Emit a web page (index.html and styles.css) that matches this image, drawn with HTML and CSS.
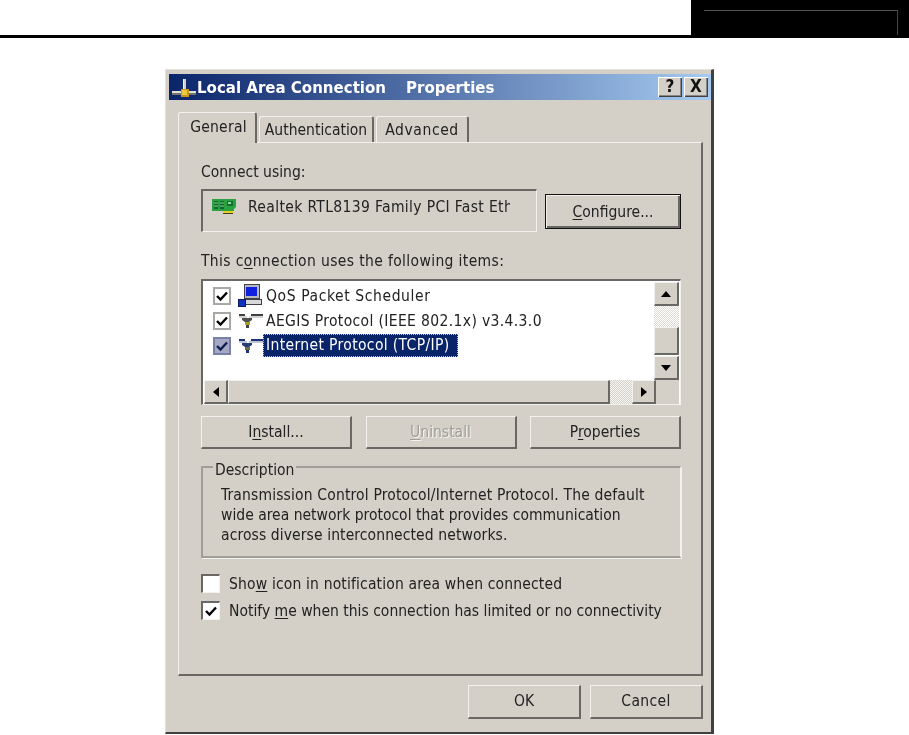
FILE: index.html
```html
<!DOCTYPE html>
<html lang="en">
<head>
    <meta charset="UTF-8">
    <title>Local Area Connection Properties</title>
    <link rel="stylesheet" href="styles.css">
</head>
<body>

    <div class="page-head">
        <div class="head-rule"></div>
        <div class="head-tag"><div class="head-tag-line"></div></div>
    </div>

    <div class="dialog">
        <div class="titlebar">
            <svg class="title-icon" width="26" height="24" viewBox="0 0 26 24">
                <rect x="12" y="4" width="3" height="11" fill="#d0d0c8"/>
                <rect x="12" y="4" width="1" height="11" fill="#f4f4ec"/>
                <rect x="1" y="16" width="24" height="2" fill="#e0e0d8"/>
                <rect x="1" y="18" width="24" height="2" fill="#747468"/>
                <rect x="10" y="14" width="8" height="8" fill="#c89818"/>
                <rect x="11" y="15" width="5" height="5" fill="#f0c840"/>
            </svg>
            <span class="title-text">Local Area Connection</span>
            <span class="title-text title-second">Properties</span>
            <div class="title-btns">
                <div class="title-btn">?</div>
                <div class="title-btn">X</div>
            </div>
        </div>

        <div class="tabs">
            <div class="tab tab-active">General</div>
            <div class="tab tab-auth">Authentication</div>
            <div class="tab tab-adv wide-3">Advanced</div>
        </div>

        <div class="panel">
            <div class="lbl lbl-connect">Connect using:</div>
            <div class="connect-row">
                <div class="device">
                    <svg width="25" height="18" viewBox="0 0 25 18">
                        <path d="M0 1h24v8l-2 2v2H0z" fill="#2aa040"/>
                        <path d="M2 3h4v8H2zM8 3h4v8H8z" fill="#0f6a28"/>
                        <path d="M2 5h4M2 8h4M8 5h4M8 8h4" stroke="#7fd090" stroke-width="1"/>
                        <rect x="15" y="3" width="6" height="5" fill="#107030"/>
                        <rect x="16" y="4" width="3" height="2" fill="#90d8a0"/>
                        <rect x="11" y="13" width="10" height="2" fill="#e8d020"/>
                        <rect x="11" y="15" width="10" height="1" fill="#3c3c30"/>
                    </svg>
                    <span class="device-name wide-2">Realtek RTL8139 Family PCI Fast Eth</span>
                </div>
                <div class="btn btn-default btn-configure"><span><u>C</u>onfigure...</span></div>
            </div>

            <div class="lbl lbl-items wide-2">This c<u>o</u>nnection uses the following items:</div>
            <div class="listbox">
                <div class="list-main">
                    <div class="list-rows">
                        <div class="row">
                            <div class="check"><svg width="14" height="14" viewBox="0 0 14 14"><path class="tick" d="M2 7l3.5 3.5L12 3.5"/></svg></div>
                            <svg class="row-icon" width="25" height="24" viewBox="0 0 25 24">
                                <rect x="6.5" y="0.5" width="15" height="14" fill="#b8b8c0" stroke="#404048"/>
                                <rect x="8" y="3" width="11" height="9" fill="#1020e0"/>
                                <rect x="7.5" y="15.5" width="16" height="5" fill="#d8d8d8" stroke="#404048"/>
                                <rect x="0.5" y="15.5" width="7" height="7" fill="#1030c0" stroke="#101860"/>
                            </svg>
                            <span class="row-text wide-3">QoS Packet Scheduler</span>
                        </div>
                        <div class="row">
                            <div class="check"><svg width="14" height="14" viewBox="0 0 14 14"><path class="tick" d="M2 7l3.5 3.5L12 3.5"/></svg></div>
                            <svg class="row-icon" width="25" height="16" viewBox="0 0 25 16">
                                <path d="M1 2h6M13 2h12" stroke="#404040" stroke-width="2"/>
                                <path d="M1 4h8M11 4h14" stroke="#a8a8a8"/>
                                <path d="M4 5h10v2l-3 2H7L4 7z" fill="#505050"/>
                                <rect x="7" y="9" width="5" height="3" fill="#a8a020"/>
                                <rect x="8" y="12" width="3" height="3" fill="#404040"/>
                            </svg>
                            <span class="row-text wide-2">AEGIS Protocol (IEEE 802.1x) v3.4.3.0</span>
                        </div>
                        <div class="row">
                            <div class="check check-selected"><svg width="14" height="14" viewBox="0 0 14 14"><path class="tick tick-selected" d="M2 7l3.5 3.5L12 3.5"/></svg></div>
                            <svg class="row-icon" width="25" height="16" viewBox="0 0 25 16">
                                <path d="M1 2h6M13 2h12" stroke="#1c3070" stroke-width="2"/>
                                <path d="M1 4h8M11 4h14" stroke="#7888b0"/>
                                <path d="M4 5h10v2l-3 2H7L4 7z" fill="#283c78"/>
                                <rect x="7" y="9" width="5" height="3" fill="#687048"/>
                                <rect x="8" y="12" width="3" height="3" fill="#1c3070"/>
                            </svg>
                            <span class="row-text row-selected wide-2">Internet Protocol (TCP/IP)</span>
                        </div>
                    </div>
                    <div class="vscroll">
                        <div class="sb-btn"><svg width="12" height="8" viewBox="0 0 12 8"><path d="M6 1l5 6H1z"/></svg></div>
                        <div class="sb-track sb-track-up"></div>
                        <div class="sb-thumb sb-thumb-v"></div>
                        <div class="sb-btn sb-btn-down"><svg width="12" height="8" viewBox="0 0 12 8"><path d="M1 1h10L6 7z"/></svg></div>
                    </div>
                </div>
                <div class="hscroll">
                    <div class="sb-btn sb-btn-h"><svg width="8" height="12" viewBox="0 0 8 12"><path d="M7 1v10L1 6z"/></svg></div>
                    <div class="sb-thumb sb-thumb-h"></div>
                    <div class="sb-track sb-track-h"></div>
                    <div class="sb-btn sb-btn-h"><svg width="8" height="12" viewBox="0 0 8 12"><path d="M1 1v10l6-5z"/></svg></div>
                </div>
            </div>

            <div class="btn-row">
                <div class="btn"><span>I<u>n</u>stall...</span></div>
                <div class="btn btn-disabled"><span><u>U</u>ninstall</span></div>
                <div class="btn"><span>P<u>r</u>operties</span></div>
            </div>

            <div class="group">
                <div class="legend">Description</div>
                <div class="group-text">
                    <div class="wide-1">Transmission Control Protocol/Internet Protocol. The default</div>
                    <div>wide area network protocol that provides communication</div>
                    <div class="wide-0">across diverse interconnected networks.</div>
                </div>
            </div>

            <label class="option">
                <div class="check check-sunken"></div>
                <span class="wide-1">Sho<u>w</u> icon in notification area when connected</span>
            </label>
            <label class="option">
                <div class="check check-sunken"><svg width="14" height="14" viewBox="0 0 14 14"><path class="tick" d="M2 7l3.5 3.5L12 3.5"/></svg></div>
                <span>Notify <u>m</u>e when this connection has limited or no connectivity</span>
            </label>
        </div>

        <div class="dialog-btns">
            <div class="btn btn-ok"><span>OK</span></div>
            <div class="btn btn-ok"><span class="wide-2">Cancel</span></div>
        </div>
    </div>

</body>
</html>
```
FILE: styles.css
```css
:root {
    --face: #d4d0c8;
    --shadow: #6a6864;
    --dark: #404040;
    --light: #f4f2ee;
    --navy: #0a246a;
}

* { margin: 0; padding: 0; box-sizing: border-box; }

body {
    width: 909px;
    height: 735px;
    overflow: hidden;
    background: #fff;
    color: #222;
    font-family: "DejaVu Sans Condensed", "DejaVu Sans", sans-serif;
    font-size: 15.5px;
}

u { text-underline-offset: 2px; }

/* tahoma runs a little wider on some lines */
.wide-0 { letter-spacing: 0.1px; }
.wide-1 { letter-spacing: 0.16px; }
.wide-2 { letter-spacing: 0.36px; }
.wide-3 { letter-spacing: 0.6px; }

/* page header */
.page-head {
    display: flex;
    height: 38px;
}

.head-rule {
    flex: 1;
    border-bottom: 3px solid #000;
}

.head-tag {
    width: 218px;
    background: #000;
    padding: 10px 11px 3px 13px;
}

.head-tag-line {
    height: 100%;
    border-top: 1px solid #555;
    border-right: 1px solid #444;
}

/* dialog */
.dialog {
    width: 549px;
    height: 665px;
    margin: 31px 0 0 165px;
    padding: 4px 0 0 3px;
    background: var(--face);
    border-top: 1px solid #e4e2dc;
    border-left: 1px solid #e4e2dc;
    border-right: 3px solid var(--dark);
    border-bottom: 2px solid var(--dark);
    filter: blur(0.3px);
}

.titlebar {
    display: flex;
    align-items: center;
    height: 26px;
    padding-left: 2px;
    color: #fff;
    font-weight: bold;
    background: linear-gradient(90deg, var(--navy), #a6caf0);
}

.title-icon { flex: none; }

.title-text { font-size: 16.7px; }
.title-second { margin-left: 20px; }

.title-btns {
    display: flex;
    gap: 2px;
    margin-left: auto;
    margin-right: 3px;
}

.title-btn {
    width: 24px;
    height: 20px;
    background: var(--face);
    color: #111;
    font-size: 17px;
    line-height: 19px;
    text-align: center;
    font-weight: bold;
    box-shadow: inset 1px 1px 0 #fff, inset -1px -1px 0 var(--dark), inset -2px -2px 0 #888;
}

/* tabs */
.tabs {
    display: flex;
    align-items: flex-end;
    height: 42px;
    margin-left: 9px;
}

.tab {
    height: 26px;
    margin-right: 2px;
    padding-top: 4px;
    text-align: center;
    background: var(--face);
    border-top: 1px solid var(--light);
    border-left: 1px solid var(--light);
    border-right: 2px solid var(--shadow);
    border-radius: 3px 3px 0 0;
}

.tab-active {
    position: relative;
    height: 31px;
    width: 79px;
    padding: 5px 0 0 3px;
    letter-spacing: 0.25px;
    z-index: 1;
    margin-bottom: -1px;
}

.tab-auth { width: 115px; }
.tab-adv { width: 93px; }

.panel {
    width: 525px;
    height: 534px;
    margin-left: 9px;
    padding: 20px 0 0 22px;
    background: var(--face);
    border-top: 1px solid var(--light);
    border-left: 1px solid var(--light);
    border-right: 2px solid var(--shadow);
    border-bottom: 2px solid var(--shadow);
}

.lbl { height: 19px; line-height: 19px; }

.connect-row {
    display: flex;
    align-items: flex-end;
    gap: 8px;
    margin-top: 7px;
    width: 480px;
}

.device {
    display: flex;
    align-items: center;
    width: 336px;
    height: 43px;
    padding: 0 0 9px 9px;
    border-top: 2px solid var(--shadow);
    border-left: 2px solid var(--shadow);
    border-right: 1px solid var(--light);
    border-bottom: 1px solid var(--light);
    overflow: hidden;
}

.device svg { flex: none; }

.device-name {
    width: 262px;
    margin-left: 11px;
    white-space: nowrap;
    overflow: hidden;
    flex: none;
}

/* buttons */
.btn {
    display: flex;
    align-items: center;
    justify-content: center;
    height: 33px;
    background: var(--face);
    border-top: 1px solid var(--light);
    border-left: 1px solid var(--light);
    border-right: 2px solid var(--shadow);
    border-bottom: 2px solid var(--shadow);
}

.btn-default {
    width: 136px;
    height: 35px;
    margin-bottom: 3px;
    border: 1px solid #111;
    box-shadow: inset 1px 1px 0 var(--light), inset -2px -2px 0 var(--shadow);
}

.btn-disabled {
    color: #a09e98;
    text-shadow: 1px 1px 0 var(--light);
}

.lbl-items { margin-top: 20px; }

.listbox {
    width: 480px;
    height: 126px;
    margin-top: 8px;
    background: #fff;
    border-top: 2px solid var(--shadow);
    border-left: 2px solid var(--shadow);
    border-right: 1px solid var(--light);
    border-bottom: 1px solid var(--light);
    display: flex;
    flex-direction: column;
    padding: 1px 1px 0 1px;
}

.list-main {
    display: flex;
    height: 98px;
}

.list-rows {
    flex: 1;
    padding: 1px 0 0 9px;
}

.row {
    display: flex;
    align-items: center;
    height: 25px;
    white-space: nowrap;
}

.check {
    flex: none;
    display: flex;
    align-items: center;
    justify-content: center;
    width: 18px;
    height: 18px;
    background: #fff;
    border: 2px solid #a8a8a4;
}

.tick {
    fill: none;
    stroke: #000;
    stroke-width: 2.4;
}

.tick-selected { stroke: #101c50; }

.check-selected {
    background: #a4a8c4;
    border-color: #7880a8;
}

.check-sunken {
    width: 19px;
    height: 19px;
    border-top: 2px solid var(--shadow);
    border-left: 2px solid var(--shadow);
    border-right: 1px solid var(--light);
    border-bottom: 1px solid var(--light);
}

.row-icon {
    flex: none;
    margin-left: 7px;
}

.row-text { margin-left: 3px; }

.row-selected {
    margin-left: 0;
    padding: 2px 8px 3px 3px;
    color: #fff;
    background: var(--navy);
    outline: 1px dotted #d8c868;
    outline-offset: -1px;
}

/* scrollbars */
.vscroll {
    width: 25px;
    display: flex;
    flex-direction: column;
}

.hscroll {
    display: flex;
    height: 24px;
    background: var(--face);
}

.sb-btn {
    flex: none;
    display: flex;
    align-items: center;
    justify-content: center;
    width: 25px;
    height: 24px;
    background: var(--face);
    border-top: 1px solid var(--light);
    border-left: 1px solid var(--light);
    border-right: 2px solid var(--shadow);
    border-bottom: 2px solid var(--shadow);
}

.sb-btn svg { fill: #000; }

.sb-btn-h { width: 24px; }

.sb-track {
    background: repeating-conic-gradient(#d4d0c8 0 25%, #fff 0 50%) 0 0 / 2px 2px;
    opacity: .8;
}

.sb-track-up { height: 21px; }

.sb-track-h { width: 22px; }

.sb-thumb {
    background: var(--face);
    border-top: 1px solid var(--light);
    border-left: 1px solid var(--light);
    border-right: 2px solid var(--shadow);
    border-bottom: 2px solid var(--shadow);
}

.sb-thumb-v { height: 29px; }
.sb-btn-down { margin-top: 1px; }

.sb-thumb-h { width: 382px; }

.btn-row {
    display: grid;
    grid-template-columns: 151px 151px 151px;
    column-gap: 13.5px;
    width: 480px;
    margin-top: 11px;
}

.group {
    position: relative;
    width: 480px;
    height: 92px;
    margin-top: 17px;
    padding: 17px 0 0 18px;
    border-top: 2px solid #a09e98;
    border-left: 2px solid #a09e98;
    border-right: 1px solid var(--light);
    border-bottom: 2px solid #a09e98;
    box-shadow: 1px 1px 0 var(--light);
}

.legend {
    position: absolute;
    top: -7px;
    left: 10px;
    padding: 0 2px;
    background: var(--face);
}

.group-text div {
    height: 20px;
    line-height: 20px;
    white-space: nowrap;
}

.option {
    display: flex;
    align-items: center;
    gap: 9px;
    height: 27px;
    white-space: nowrap;
}

.group + .option { margin-top: 12px; }

.dialog-btns {
    display: flex;
    justify-content: flex-end;
    gap: 9px;
    width: 534px;
    margin-top: 9px;
}

.btn-ok {
    width: 113px;
    height: 34px;
    padding-bottom: 1px;
}
```
